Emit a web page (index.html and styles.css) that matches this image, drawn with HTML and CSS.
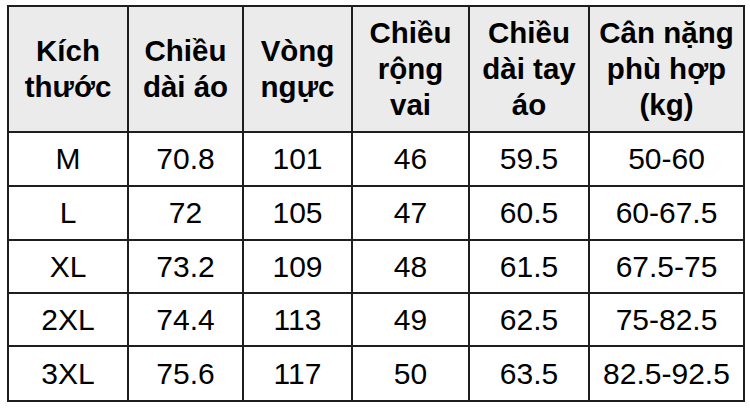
FILE: index.html
```html
<!DOCTYPE html>
<html lang="vi">
<head>
<meta charset="utf-8">
<title>Bảng kích thước</title>
<link rel="stylesheet" href="styles.css">
</head>
<body>
<table class="size-table">
  <colgroup>
    <col class="c1"><col class="c2"><col class="c3"><col class="c4"><col class="c5"><col class="c6">
  </colgroup>
  <thead>
    <tr class="head-row">
      <th>Kích<br>thước</th>
      <th>Chiều<br>dài áo</th>
      <th>Vòng<br>ngực</th>
      <th>Chiều<br>rộng<br>vai</th>
      <th>Chiều<br>dài tay<br>áo</th>
      <th>Cân nặng<br>phù hợp<br>(kg)</th>
    </tr>
  </thead>
  <tbody>
    <tr class="r1"><td>M</td><td>70.8</td><td>101</td><td>46</td><td>59.5</td><td>50-60</td></tr>
    <tr class="r2"><td>L</td><td>72</td><td>105</td><td>47</td><td>60.5</td><td>60-67.5</td></tr>
    <tr class="r3"><td>XL</td><td>73.2</td><td>109</td><td>48</td><td>61.5</td><td>67.5-75</td></tr>
    <tr class="r4"><td>2XL</td><td>74.4</td><td>113</td><td>49</td><td>62.5</td><td>75-82.5</td></tr>
    <tr class="r5"><td>3XL</td><td>75.6</td><td>117</td><td>50</td><td>63.5</td><td>82.5-92.5</td></tr>
  </tbody>
</table>
</body>
</html>
```
FILE: styles.css
```css
html, body {
  margin: 0;
  padding: 0;
  background: #ffffff;
}

body {
  padding: 5px 0 0 7px;
  font-family: "Liberation Sans", Arial, sans-serif;
  color: #000000;
}

.size-table {
  border-collapse: collapse;
  table-layout: fixed;
  width: 738px;
  border: 2px solid #1e1e1e;
}

.c1 { width: 120px; }
.c2 { width: 115px; }
.c3 { width: 109px; }
.c4 { width: 117px; }
.c5 { width: 120px; }
.c6 { width: 155px; }

.size-table th,
.size-table td {
  border: 2px solid #1e1e1e;
  padding: 0;
  text-align: center;
  vertical-align: middle;
}

.size-table th {
  background: #ebebeb;
  font-weight: bold;
  font-size: 29.5px;
  line-height: 36px;
}

.size-table td {
  background: #ffffff;
  font-weight: normal;
  font-size: 30px;
  line-height: 34px;
}

.head-row { height: 126px; }
.r1, .r2 { height: 54px; }
.r3, .r4 { height: 53px; }
.r5 { height: 55px; }
```
